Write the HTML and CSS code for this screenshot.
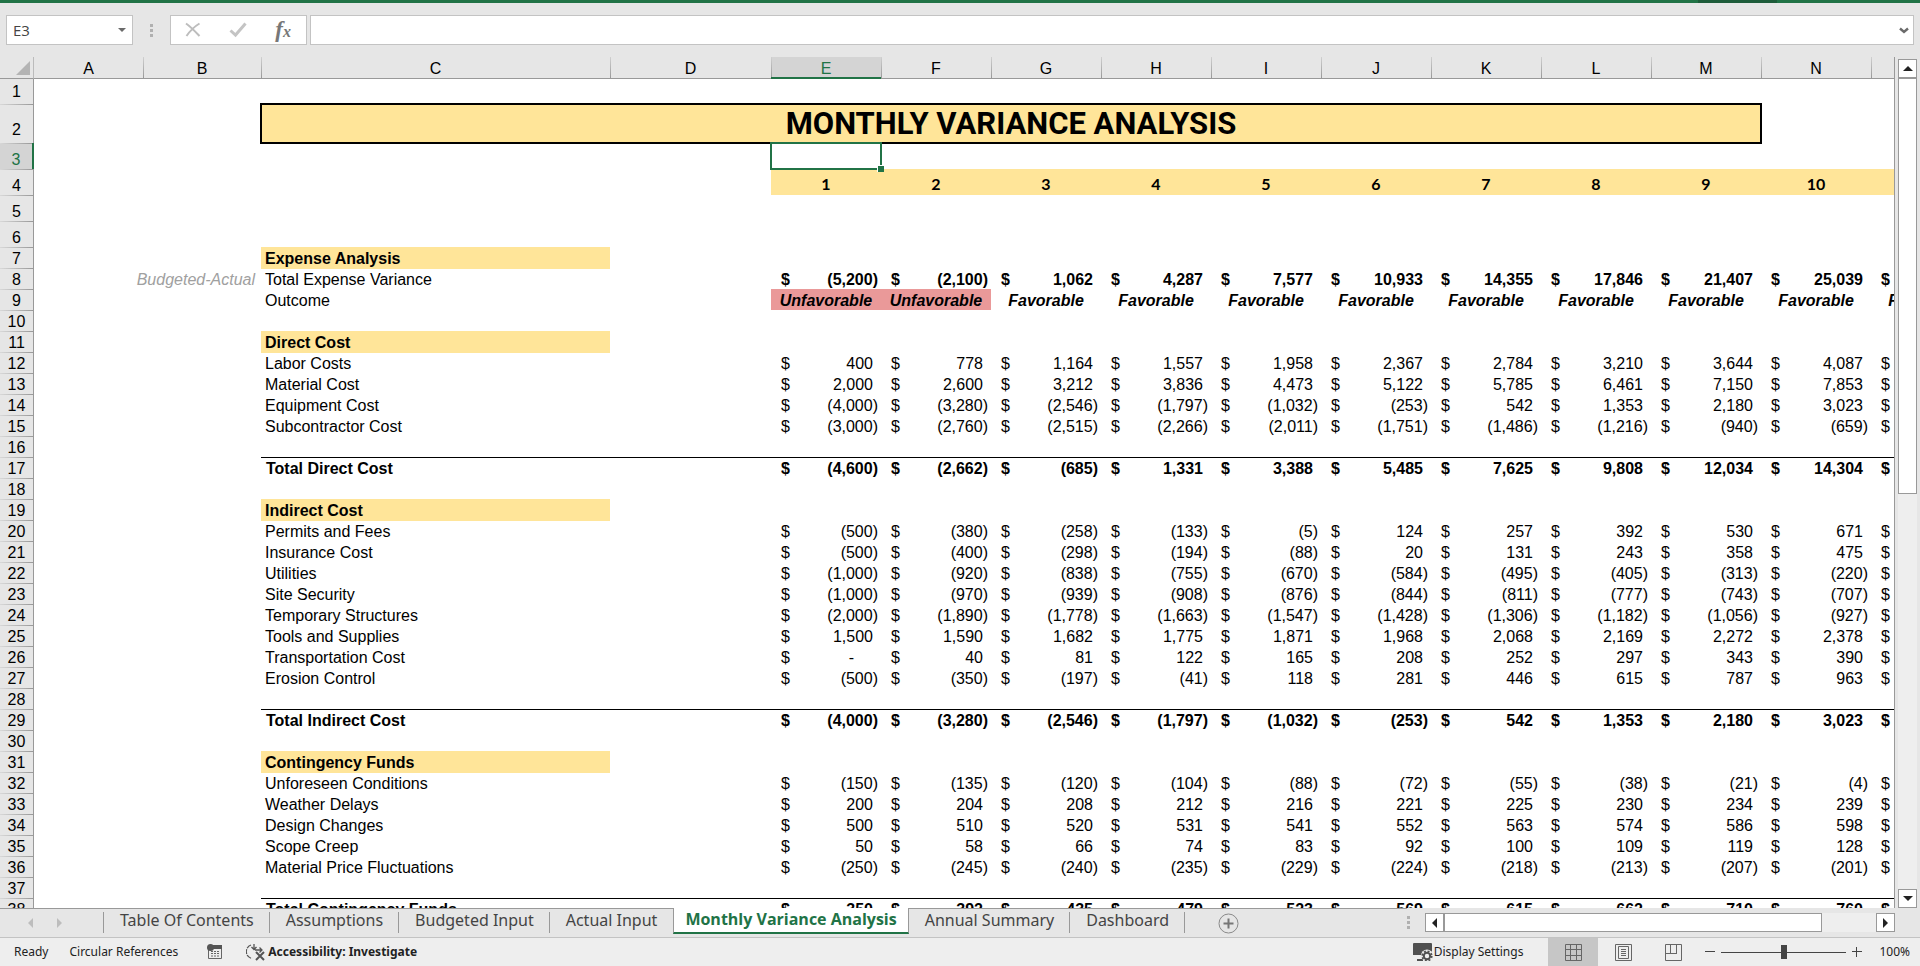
FILE: index.html
```html
<!DOCTYPE html>
<html lang="en">
<head>
<meta charset="utf-8">
<title>Monthly Variance Analysis</title>
<link rel="stylesheet" href="styles.css">
</head>
<body>
<div class="ribbon-edge"><span class="ribbon-shade"></span></div>
<header class="formula-bar">
  <div class="name-box">
    <input class="name-input" type="text" value="E3" aria-label="Name box">
    <button class="plain" type="button" aria-label="Open name list"><svg width="8" height="4" viewBox="0 0 8 4"><path d="M0 0h8L4 4z" fill="#6a6a6a"/></svg></button>
  </div>
  <svg class="grip" width="3" height="13" viewBox="0 0 3 13"><path d="M0 0h3v3H0zM0 5h3v3H0zM0 10h3v3H0z" fill="#b0b0b0"/></svg>
  <div class="fx-box">
    <button class="plain" type="button" aria-label="Cancel"><svg width="16" height="16" viewBox="0 0 16 16"><path d="M1 1.500 Q6 5 14.500 14M14.500 1.500Q7 6 1.500 14" fill="none" stroke="#bdbdbd" stroke-width="2"/></svg></button>
    <button class="plain" type="button" aria-label="Enter"><svg width="18" height="16" viewBox="0 0 18 16"><path d="M1.500 8.500 6.500 13 16.500 1.500" fill="none" stroke="#c4c4c4" stroke-width="3"/></svg></button>
    <button class="plain fx" type="button" aria-label="Insert function"><i>f</i><i class="fx-x">x</i></button>
  </div>
  <div class="formula-box">
    <input class="formula-input" type="text" aria-label="Formula">
    <button class="plain" type="button" aria-label="Expand formula bar"><svg width="10" height="7" viewBox="0 0 10 7"><path d="M1 1.500 5 5 9 1.500" fill="none" stroke="#6a6a6a" stroke-width="2.400"/></svg></button>
  </div>
</header>
<main class="workspace">
  <div class="grid-view">
    <table class="sheet">
      <colgroup><col class="w-head"><col class="w-a"><col class="w-b"><col class="w-c"><col class="w-d"><col span="11" class="w-m"></colgroup>
      <thead id="columns"></thead>
      <tbody id="rows"></tbody>
    </table>
  </div>
  <div class="v-scroll">
    <button class="scroll-btn" type="button" aria-label="Scroll up"><svg width="10" height="5" viewBox="0 0 10 5"><path d="M0 5h10L5 0z" fill="#222"/></svg></button>
    <div class="v-track"><div class="v-thumb"></div></div>
    <button class="scroll-btn" type="button" aria-label="Scroll down"><svg width="10" height="5" viewBox="0 0 10 5"><path d="M0 0h10L5 5z" fill="#222"/></svg></button>
  </div>
</main>
<nav class="tab-bar" aria-label="Sheets">
  <div class="tab-nav">
    <button class="plain" type="button" aria-label="Previous sheets"><svg width="5" height="10" viewBox="0 0 5 10"><path d="M5 0v10L0 5z" fill="#bdbdbd"/></svg></button>
    <button class="plain" type="button" aria-label="Next sheets"><svg width="5" height="10" viewBox="0 0 5 10"><path d="M0 0v10l5-5z" fill="#bdbdbd"/></svg></button>
  </div>
  <button class="tab" type="button">Table Of Contents</button>
  <button class="tab" type="button">Assumptions</button>
  <button class="tab" type="button">Budgeted Input</button>
  <button class="tab before-active" type="button">Actual Input</button>
  <button class="tab active" type="button">Monthly Variance Analysis</button>
  <button class="tab" type="button">Annual Summary</button>
  <button class="tab" type="button">Dashboard</button>
  <button class="plain add-tab" type="button" aria-label="New sheet"><svg width="21" height="21" viewBox="0 0 21 21" fill="none"><circle cx="10.500" cy="10.500" r="9.500" stroke="#8a8a8a"/><path d="M5.500 10.500h10M10.500 5.500v10" stroke="#777" stroke-width="2"/></svg></button>
  <svg class="grip tab-grip" width="3" height="13" viewBox="0 0 3 13"><path d="M0 0h3v3H0zM0 5h3v3H0zM0 10h3v3H0z" fill="#b0b0b0"/></svg>
  <div class="h-scroll">
    <button class="scroll-btn" type="button" aria-label="Scroll left"><svg width="5" height="10" viewBox="0 0 5 10"><path d="M5 0v10L0 5z" fill="#222"/></svg></button>
    <div class="h-track"><div class="h-thumb"></div></div>
    <button class="scroll-btn" type="button" aria-label="Scroll right"><svg width="5" height="10" viewBox="0 0 5 10"><path d="M0 0v10l5-5z" fill="#222"/></svg></button>
  </div>
</nav>
<footer class="status-bar">
  <span>Ready</span>
  <span class="circular">Circular References</span>
  <svg class="macro" width="16" height="16" viewBox="0 0 16 16"><path d="M1.500 5v9.500h13V2H6" fill="none" stroke="#666"/><path d="M6 1h9v4H6z" fill="#555"/><circle cx="3.500" cy="3.500" r="3.500" fill="#555"/><path d="M4 7.500h8M4 9.500h8M4 12h8" stroke="#666" stroke-dasharray="2 1"/></svg>
  <button class="plain access" type="button"><svg width="20" height="18" viewBox="0 0 20 18" fill="none" stroke="#555" stroke-width="1.300"><path d="M5 2A7 7 0 0 0 6 15.500" stroke-dasharray="5 1"/><path d="M8 1v5M5.500 4 8 6.500 10.500 4M9 7h7M13.500 4.500 16 7 13.500 9.500"/><path d="M10 9l8 8M18 9l-8 8" stroke-width="2"/></svg>Accessibility: Investigate</button>
  <button class="plain display" type="button"><svg width="20" height="18" viewBox="0 0 20 18"><path d="M1 0h17a1 1 0 0 1 1 1v11H0V1a1 1 0 0 1 1-1zM4 16h6v2H4z" fill="#505050"/><circle cx="14" cy="12.500" r="6" fill="#eee"/><circle cx="14" cy="13" r="3.200" fill="none" stroke="#505050" stroke-width="2"/><circle cx="14" cy="13" r="4.800" fill="none" stroke="#505050" stroke-width="1.600" stroke-dasharray="2 1.770"/></svg>Display Settings</button>
  <div class="views">
    <button class="plain view on" type="button" aria-label="Normal view"><svg width="17" height="17" viewBox="0 0 17 17" fill="none" stroke="#666"><path d="M.5.5h16v16H.5zM.5 5.500h16M.5 11.500h16M5.500.5v16M11.500.5v16"/></svg></button>
    <button class="plain view" type="button" aria-label="Page layout"><svg width="17" height="17" viewBox="0 0 17 17" fill="none" stroke="#666"><path d="M.5.5h16v16H.5zM3.500 2.500h10v12h-10zM6 5.500h5M6 7.500h5M6 9.500h5M6 11.500h5"/></svg></button>
    <button class="plain view" type="button" aria-label="Page break preview"><svg width="17" height="17" viewBox="0 0 17 17" fill="none" stroke="#666"><path d="M.5.5h16v16H.5zM5.500.5v9M11.500.5v9M0 9.500h12"/></svg></button>
  </div>
  <div class="zoom">
    <button class="plain" type="button" aria-label="Zoom out"><svg width="10" height="10" viewBox="0 0 10 10"><path d="M0 4.500h10" stroke="#444"/></svg></button>
    <input class="zoom-range" type="range" min="0" max="100" value="50" aria-label="Zoom">
    <button class="plain" type="button" aria-label="Zoom in"><svg width="10" height="10" viewBox="0 0 10 10"><path d="M0 4.500h10M4.500 0v10" stroke="#444"/></svg></button>
    <span class="zoom-value">100%</span>
  </div>
</footer>
<script src="sheet.js"></script>
</body>
</html>
```
FILE: styles.css
```css
* { box-sizing: border-box; }
body {
  margin: 0;
  height: 100vh;
  display: flex;
  flex-direction: column;
  overflow: hidden;
  background: #e6e6e6;
  color: #000;
  font: 16px/19px "Liberation Sans", Arial, sans-serif;
}
button, input { font: inherit; color: inherit; margin: 0; }
svg { display: block; flex: none; }
.plain { display: flex; align-items: center; justify-content: center; padding: 0; border: 0; background: none; }

.ribbon-edge { display: flex; justify-content: flex-end; height: 3px; background: #217346; flex: none; padding-right: 143px; }
.ribbon-shade { width: 79px; background: #1e5c3a; }

.formula-bar { display: flex; align-items: center; flex: none; padding: 12px 6px 12px; font: 15px/20px "Open Sans", sans-serif; }
.name-box, .fx-box, .formula-box { display: flex; align-items: center; height: 30px; background: #fff; border: 1px solid #c3c3c3; }
.name-box { width: 127px; padding: 0 6px; }
.name-input, .formula-input { flex: 1; min-width: 0; border: 0; padding: 0; background: none; color: #444; outline: 0; }
.grip { margin: 0 17px; }
.fx-box { width: 137px; justify-content: space-between; padding: 0 15px 0 14px; margin-right: 3px; }
.fx { font: bold 23px/26px "Liberation Serif", serif; color: #777; height: 28px; }
.fx-x { font-size: 16px; padding-top: 4px; }
.formula-box { flex: 1; padding: 0 4px; }

.workspace { display: flex; flex: 1; min-height: 0; }
.grid-view { flex: 1; min-width: 0; overflow: hidden; border-right: 1px solid #999; background: linear-gradient(#e6e6e6 21px, #fff 21px); }
.sheet { table-layout: fixed; width: 1948px; border-collapse: separate; border-spacing: 0; }
.w-head { width: 34px; }
.w-a { width: 109px; }
.w-b { width: 118px; }
.w-c { width: 349px; }
.w-d { width: 161px; }
.w-m { width: 110px; }
.sheet td, .sheet th { padding: 0 4px; vertical-align: bottom; white-space: nowrap; text-align: left; font-weight: 400; }
.sheet thead th {
  height: 22px;
  text-align: center;
  border-bottom: 1px solid #999;
  background: linear-gradient(#d0d0d0, #999) left / 1px 100% no-repeat #e6e6e6;
}
.sheet thead th.corner { background: #e6e6e6; border-right: 1px solid #bbb; padding: 0 3px 3px 16px; }
.sheet thead th.col-a { background: #e6e6e6; }
.sheet thead th.picked { background-color: #d4d4d4; color: #217346; border-bottom-color: #217346; box-shadow: inset 0 -1px #217346; }
.sheet tbody th {
  padding: 0;
  text-align: center;
  border-right: 1px solid #999;
  background: linear-gradient(90deg, #d8d8d8, #999) top / 100% 1px no-repeat #e6e6e6;
}
.sheet tbody th.picked { background-color: #d4d4d4; color: #217346; border-right: 2px solid #217346; }
.sheet tr { height: 21px; }
.sheet tr.first { height: 25px; }
.sheet tr.tall { height: 26px; }
.sheet tr.banner { height: 39px; }
.sheet tr.first th { vertical-align: middle; background-image: none; }
.sheet tr.banner th { padding-bottom: 4px; }
.sheet td.title {
  background: #ffe599;
  outline: 2px solid #000;
  outline-offset: -1px;
  font: bold 31px/39px Roboto, sans-serif;
  text-align: center;
}
.sheet td.month { background: #ffe599; text-align: center; font: bold 16px/23px Lato, sans-serif; }
.sheet td.section { background: #ffe599; font-weight: 700; box-shadow: 0 1px #ffe599; }
.sheet td.note { text-align: right; padding-right: 6px; font-style: italic; color: #a0a0a0; }
.sheet .total td { border-top: 1px solid #000; }
.sheet .strong .label, .sheet .strong .money, .sheet .summary .money { font-weight: 700; }
.sheet .total td.note { border-top: 0; }
.sheet .total td.label { padding-left: 5px; }
.sheet td.money { text-align: right; padding: 0 3px 0 10px; }
.sheet td.plus { padding-right: 8px; }
.sheet td.nil { padding-right: 27px; }
.currency { float: left; }
.sheet td.outcome { text-align: center; font-weight: 700; font-style: italic; }
.sheet td.bad { background: #ea9999; }
.sheet td.selected { position: relative; }
.cursor { position: absolute; inset: -1px; border: 2px solid #217346; z-index: 1; }
.cursor::after { content: ""; position: absolute; right: -4px; bottom: -4px; width: 6px; height: 6px; background: #217346; border: solid #fff; border-width: 1px 0 0 1px; }

.v-scroll { display: flex; flex-direction: column; flex: none; width: 25px; padding: 2px 3px 0; }
.scroll-btn { display: flex; align-items: center; justify-content: center; flex: none; width: 19px; height: 19px; padding: 0; border: 1px solid #999; background: #fff; }
.v-track { flex: 1; background: #eee; }
.v-thumb { height: 51.3%; border: 1px solid #999; background: #fff; }

.tab-bar { display: flex; align-items: stretch; flex: none; height: 29px; font: 16px/22px "Noto Sans", sans-serif; color: #444; }
.tab-nav { display: flex; align-items: center; gap: 24px; width: 104px; padding-left: 28px; border-top: 1px solid #999; background: linear-gradient(#999, #999) right 3px / 1px 21px no-repeat; }
.tab { flex: none; padding: 0 16px 8px; border: 0; border-top: 1px solid #999; background: linear-gradient(#999, #999) right 3px / 1px 21px no-repeat; }
.tab.before-active { background: none; }
.tab.active { margin-bottom: 3px; padding: 0 11px 3px; border: solid #999; border-width: 0 1px 2px; border-bottom-color: #217346; background: #fff; color: #217346; font-family: "Open Sans", sans-serif; font-weight: 700; }
.add-tab { flex: 1; justify-content: flex-start; padding-left: 33px; border-top: 1px solid #999; }
.tab-grip { margin: 0; align-self: center; }
.h-scroll { display: flex; width: 470px; margin: 5px 25px 0 15px; height: 19px; }
.h-track { flex: 1; background: #eee; }
.h-thumb { width: 87.5%; height: 19px; border: 1px solid #999; background: #fff; }

.status-bar { display: flex; align-items: center; flex: none; height: 29px; padding: 0 10px 0 14px; border-top: 1px solid #c3c3c3; background: #eee; font: 12px/18px "Noto Sans", sans-serif; color: #222; white-space: nowrap; }
.circular { margin-left: 21px; }
.macro { margin-left: 29px; }
.access { margin-left: 23px; font-weight: 700; gap: 2px; }
.display { margin-left: auto; gap: 1px; }
.views { display: flex; align-self: stretch; margin-left: 25px; }
.view { width: 50px; }
.view.on { background: #c6c6c6; }
.zoom { display: flex; align-items: center; gap: 6px; margin-left: 7px; }
.zoom-range { appearance: none; width: 125px; height: 16px; background: linear-gradient(#444, #444) center / 100% 1px no-repeat; }
.zoom-range::-webkit-slider-thumb { appearance: none; width: 6px; height: 14px; background: #444; }
.zoom-value { margin-left: 11px; }
```
FILE: sheet.js
```js
const letters = "ABCDEFGHIJKLMNO".split("");
const rows = {
  8: ["Total Expense Variance", -5200, -2100, 1062, 4287, 7577, 10933, 14355, 17846, 21407, 25039],
  12: ["Labor Costs", 400, 778, 1164, 1557, 1958, 2367, 2784, 3210, 3644, 4087],
  13: ["Material Cost", 2000, 2600, 3212, 3836, 4473, 5122, 5785, 6461, 7150, 7853],
  14: ["Equipment Cost", -4000, -3280, -2546, -1797, -1032, -253, 542, 1353, 2180, 3023],
  15: ["Subcontractor Cost", -3000, -2760, -2515, -2266, -2011, -1751, -1486, -1216, -940, -659],
  17: ["Total Direct Cost", -4600, -2662, -685, 1331, 3388, 5485, 7625, 9808, 12034, 14304],
  20: ["Permits and Fees", -500, -380, -258, -133, -5, 124, 257, 392, 530, 671],
  21: ["Insurance Cost", -500, -400, -298, -194, -88, 20, 131, 243, 358, 475],
  22: ["Utilities", -1000, -920, -838, -755, -670, -584, -495, -405, -313, -220],
  23: ["Site Security", -1000, -970, -939, -908, -876, -844, -811, -777, -743, -707],
  24: ["Temporary Structures", -2000, -1890, -1778, -1663, -1547, -1428, -1306, -1182, -1056, -927],
  25: ["Tools and Supplies", 1500, 1590, 1682, 1775, 1871, 1968, 2068, 2169, 2272, 2378],
  26: ["Transportation Cost", 0, 40, 81, 122, 165, 208, 252, 297, 343, 390],
  27: ["Erosion Control", -500, -350, -197, -41, 118, 281, 446, 615, 787, 963],
  29: ["Total Indirect Cost", -4000, -3280, -2546, -1797, -1032, -253, 542, 1353, 2180, 3023],
  32: ["Unforeseen Conditions", -150, -135, -120, -104, -88, -72, -55, -38, -21, -4],
  33: ["Weather Delays", 200, 204, 208, 212, 216, 221, 225, 230, 234, 239],
  34: ["Design Changes", 500, 510, 520, 531, 541, 552, 563, 574, 586, 598],
  35: ["Scope Creep", 50, 58, 66, 74, 83, 92, 100, 109, 119, 128],
  36: ["Material Price Fluctuations", -250, -245, -240, -235, -229, -224, -218, -213, -207, -201],
  38: ["Total Contingency Funds", 350, 392, 435, 479, 523, 569, 615, 662, 710, 760]
};
const sections = { 7: "Expense Analysis", 11: "Direct Cost", 19: "Indirect Cost", 31: "Contingency Funds" };
const totals = [17, 29, 38];

function money(value) {
  const sign = '<span class="currency">$</span>';
  if (value === null) return `<td class="money">${sign}</td>`;
  if (value === 0) return `<td class="money nil">${sign}-</td>`;
  const text = Math.abs(value).toLocaleString("en-US");
  return value < 0 ? `<td class="money">${sign}(${text})</td>` : `<td class="money plus">${sign}${text}</td>`;
}

function row(n) {
  const months = [...Array(11).keys()];
  let kind = n === 1 ? "first" : n === 2 ? "banner" : n < 7 ? "tall" : n === 8 ? "summary" : "";
  let cells = "";
  if (n === 2) {
    cells = '<td colspan="2"></td><td class="title" colspan="11">MONTHLY VARIANCE ANALYSIS</td><td colspan="2"></td>';
  } else if (n === 3) {
    cells = '<td colspan="4"></td><td class="selected"><div class="cursor"></div></td><td colspan="10"></td>';
  } else if (n === 4) {
    cells = '<td colspan="4"></td>' + months.map(m => `<td class="month">${m + 1}</td>`).join("");
  } else if (n === 9) {
    cells = '<td colspan="2"></td><td>Outcome</td><td></td>' +
      months.map(m => m < 2 ? '<td class="outcome bad">Unfavorable</td>' : '<td class="outcome">Favorable</td>').join("");
  } else if (sections[n]) {
    cells = `<td colspan="2"></td><td class="section">${sections[n]}</td><td colspan="12"></td>`;
  } else if (rows[n]) {
    const [label, ...values] = rows[n];
    if (totals.includes(n)) kind = "strong total";
    const amounts = [...values, null].map(money).join("");
    cells = `<td class="note" colspan="2">${n === 8 ? "Budgeted-Actual" : ""}</td><td class="label">${label}</td><td></td>${amounts}`;
  } else {
    cells = '<td colspan="15"></td>';
  }
  return `<tr class="${kind}"><th scope="row"${n === 3 ? ' class="picked"' : ""}>${n}</th>${cells}</tr>`;
}

document.getElementById("columns").innerHTML =
  '<tr><th class="corner"><svg width="14" height="14" viewBox="0 0 14 14"><path d="M14 0v14H0z" fill="#b4b4b4"/></svg></th>' +
  letters.map(l => `<th scope="col" class="${l === "E" ? "picked" : l === "A" ? "col-a" : ""}">${l}</th>`).join("") + "</tr>";
document.getElementById("rows").innerHTML = Array.from({ length: 38 }, (_, i) => row(i + 1)).join("");
```
